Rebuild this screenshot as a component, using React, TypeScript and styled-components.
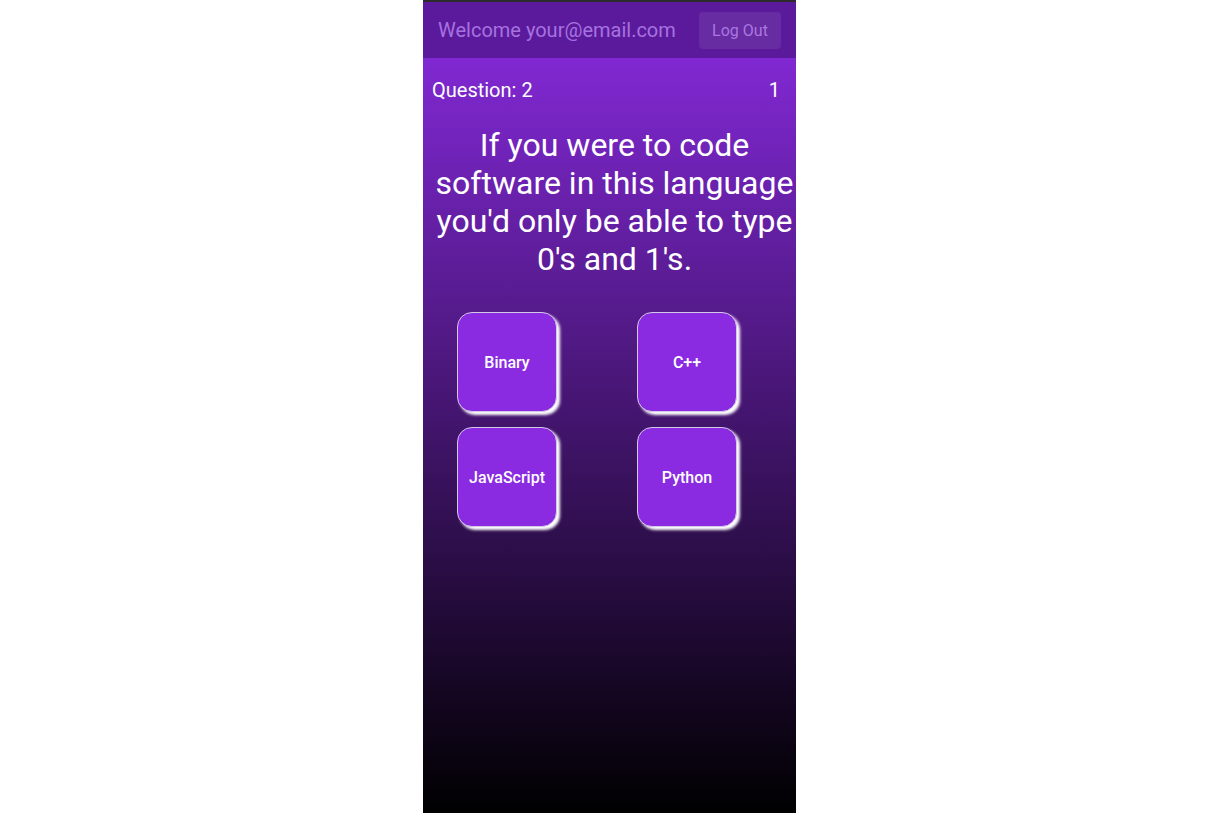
import React from "react";
import styled, { createGlobalStyle } from "styled-components";

const Global = createGlobalStyle`
  html, body { margin: 0; padding: 0; background: #fff; }
  body { font-family: Roboto, "Noto Sans", sans-serif; }
  * { box-sizing: border-box; }
`;

const Page = styled.div`
  display: flex;
  width: 100%;
  height: 813px;
  padding-left: 423px;
`;

const Phone = styled.div`
  width: 373px;
  height: 813px;
  display: flex;
  flex-direction: column;
  border-top: 2px solid #2b2b2b;
  background: linear-gradient(180deg, #8a2be2 0%, #000 100%);
  overflow: hidden;
`;

const Header = styled.header`
  height: 56px;
  flex: none;
  display: flex;
  align-items: center;
  justify-content: space-between;
  padding: 0 15px 0 15px;
  background: #5b1a9b;
`;

const Welcome = styled.span`
  font-size: 20px;
  color: #a672e0;
`;

const LogOut = styled.button`
  font-family: Roboto, sans-serif;
  font-size: 16px;
  color: #a978e0;
  background: rgba(255, 255, 255, 0.08);
  border: none;
  border-radius: 4px;
  width: 82px;
  height: 37px;
  padding: 0;
  margin-top: 1px;
`;

const InfoRow = styled.div`
  display: flex;
  justify-content: space-between;
  padding: 20px 16px 0 9px;
  font-size: 20px;
  color: #fff;
  line-height: 24px;
`;

const QuestionText = styled.h1`
  margin: 24px 0 0 10px;
  font-size: 32px;
  font-weight: 400;
  line-height: 38px;
  text-align: center;
  color: #fff;
`;

const Answers = styled.div`
  display: grid;
  grid-template-columns: 180px 180px;
  row-gap: 15px;
  padding-left: 34px;
  margin-top: 34px;
`;

const Answer = styled.button`
  width: 100px;
  height: 100px;
  background: #8a2be2;
  border: 1px solid #d4c8e8;
  border-radius: 15px;
  box-shadow: 3px 3px 3px #ffffff;
  color: #fff;
  font-family: Roboto, sans-serif;
  font-size: 16px;
  font-weight: 500;
  padding: 0;
`;

const answers = ["Binary", "C++", "JavaScript", "Python"];

export default function App() {
  return (
    <>
      <Global />
      <Page>
        <Phone>
          <Header>
            <Welcome>Welcome your@email.com</Welcome>
            <LogOut>Log Out</LogOut>
          </Header>
          <InfoRow>
            <span>Question: 2</span>
            <span>1</span>
          </InfoRow>
          <QuestionText>
            If you were to code software in this language you'd only be able to type 0's and 1's.
          </QuestionText>
          <Answers>
            {answers.map((a) => (
              <Answer key={a}>{a}</Answer>
            ))}
          </Answers>
        </Phone>
      </Page>
    </>
  );
}
